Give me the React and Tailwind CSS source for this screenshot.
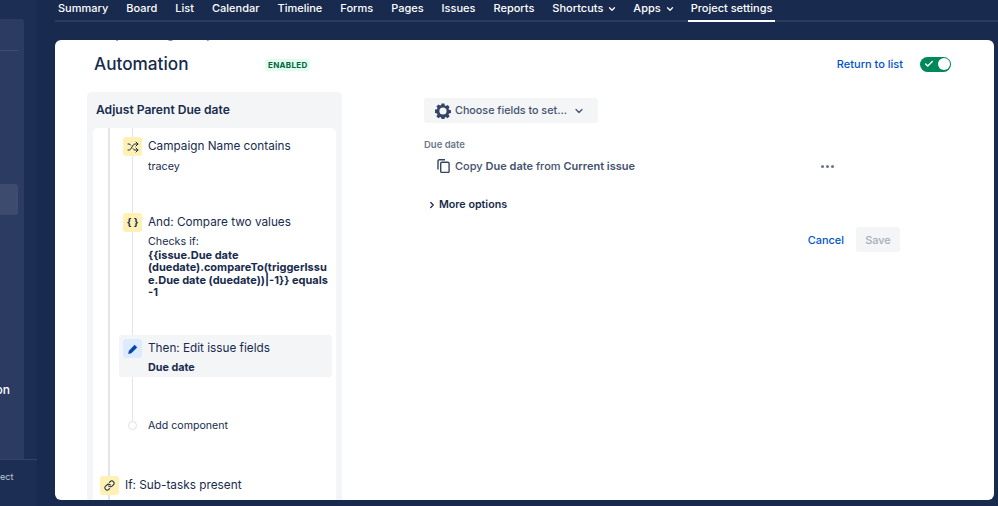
import { Check, ChevronDown, ChevronRight, Link, Shuffle } from "lucide-react";

const navItems = [
  { label: "Summary" },
  { label: "Board" },
  { label: "List" },
  { label: "Calendar" },
  { label: "Timeline" },
  { label: "Forms" },
  { label: "Pages" },
  { label: "Issues" },
  { label: "Reports" },
  { label: "Shortcuts", menu: true },
  { label: "Apps", menu: true },
  { label: "Project settings", active: true },
];

function IconBox({ tone = "bg-[#fff0b3]", className = "", children }) {
  return (
    <div className={`flex h-[19px] w-[19px] shrink-0 items-center justify-center rounded-[3px] ${tone} ${className}`}>
      {children}
    </div>
  );
}

function GearIcon() {
  return (
    <svg width="16" height="16" viewBox="0 0 16 16" fill="#344563">
      <path
        fillRule="evenodd"
        d="M6.6.6h2.8l.4 2 1.1.5 1.7-1.1 2 2-1.1 1.7.5 1.1 2 .4v2.8l-2 .4-.5 1.1 1.1 1.7-2 2-1.7-1.1-1.1.5-.4 2H6.6l-.4-2-1.1-.5-1.7 1.1-2-2 1.1-1.7-.5-1.1-2-.4V6.6l2-.4.5-1.1L1.4 3.4l2-2 1.7 1.1 1.1-.5ZM8 4.4a3.6 3.6 0 1 0 0 7.2 3.6 3.6 0 0 0 0-7.2Z"
      />
    </svg>
  );
}

function CopyIcon() {
  return (
    <svg width="13" height="14" viewBox="0 0 13 14" fill="none" stroke="#344563" strokeWidth="1.4">
      <path d="M1 10.5V2a1.2 1.2 0 0 1 1.2-1.2H8" />
      <rect x="3.7" y="3.2" width="8.4" height="10.2" rx="1.2" />
    </svg>
  );
}

function RuleRow({ icon, title, selected, children, className = "" }) {
  return (
    <div className={`relative ml-[26px] flex w-[213px] gap-[6px] rounded-[3px] pl-1 pr-[2px] pt-1 ${selected ? "bg-[#f4f5f7]" : ""} ${className}`}>
      {icon}
      <div className="min-w-0 flex-1 pt-px">
        <div className="text-[11.75px] leading-[17px]">{title}</div>
        <div className={`break-words text-[10.75px] leading-[12.4px] ${selected ? "mt-[4.5px]" : "mt-[5.5px]"}`}>{children}</div>
      </div>
    </div>
  );
}

function RulePanel() {
  return (
    <div className="flex h-[420px] w-[255px] shrink-0 flex-col rounded-t-[5px] bg-[#f4f5f7] px-[6px]">
      <div className="pl-[3px] pt-[9px] text-[12.1px] font-semibold leading-[17px]">Adjust Parent Due date</div>
      <div className="relative mt-[10px] flex-1 overflow-hidden rounded-t-[5px] bg-white pt-[5px]">
        <div className="absolute bottom-0 left-[15px] top-0 w-[1.5px] bg-[#e4e5ea]" />
        <div className="absolute left-[38.5px] top-0 h-[293px] w-[1.5px] bg-[#e4e5ea]" />
        <RuleRow
          title="Campaign Name contains"
          icon={
            <IconBox className="relative">
              <Shuffle size={12} strokeWidth={2} />
            </IconBox>
          }
        >
          tracey
        </RuleRow>
        <RuleRow
          className="mt-[36px]"
          title="And: Compare two values"
          icon={
            <IconBox className="relative">
              <span className="text-[10px] font-bold leading-none">{"{ }"}</span>
            </IconBox>
          }
        >
          <div>Checks if:</div>
          <div className="text-[11px] font-bold">
            {"{{issue.Due date (duedate).compareTo(triggerIssue.Due date (duedate))|-1}} equals -1"}
          </div>
        </RuleRow>
        <RuleRow
          selected
          className="mt-[37px] h-[42px]"
          title="Then: Edit issue fields"
          icon={
            <IconBox tone="bg-[#deebff]" className="relative">
              <svg width="12" height="12" viewBox="0 0 12 12" fill="#0747a6">
                <path d="M7.6 1.8 10.2 4.4 4.3 10.2 1.2 10.9 1.9 7.7Z" />
              </svg>
            </IconBox>
          }
        >
          <span className="font-bold">Due date</span>
        </RuleRow>
        <div className="relative ml-[35px] mt-[42px] flex h-[12px] items-center gap-[11px] text-[10.6px]">
          <span className="h-[9px] w-[9px] shrink-0 rounded-full border-[1.5px] border-[#dfe1e6] bg-white" />
          <span>Add component</span>
        </div>
        <div className="relative ml-[7px] mt-[45px] flex items-center gap-[6px]">
          <IconBox>
            <Link size={11} strokeWidth={2.2} />
          </IconBox>
          <span className="text-[11.8px] leading-[17px]">If: Sub-tasks present</span>
        </div>
      </div>
    </div>
  );
}

function FieldEditor() {
  return (
    <div className="ml-[82px] w-[476px] pt-[6px]">
      <button className="flex h-[25px] w-[174px] items-center rounded-[3px] bg-[#f4f5f7] pl-[11px] text-[10.75px] font-medium text-[#42526e]">
        <GearIcon />
        <span className="ml-[4px] mt-[2px]">Choose fields to set...</span>
        <ChevronDown size={12} strokeWidth={2.5} className="ml-[6px]" />
      </button>
      <div className="mt-[15px] text-[9.5px] font-semibold leading-[14px] text-[#6b778c]">Due date</div>
      <div className="mt-[6px] flex h-[16px] items-center pl-[13px] text-[11px] font-medium text-[#42526e]">
        <CopyIcon />
        <span className="ml-[5px]">
          Copy <b className="font-semibold">Due date</b> from <b className="font-semibold">Current issue</b>
        </span>
        <div className="ml-auto mr-[66px] flex gap-[2px]">
          <span className="h-[3px] w-[3px] rounded-full bg-[#6b778c]" />
          <span className="h-[3px] w-[3px] rounded-full bg-[#6b778c]" />
          <span className="h-[3px] w-[3px] rounded-full bg-[#6b778c]" />
        </div>
      </div>
      <div className="mt-[23px] flex items-center pl-[3px] text-[10.7px] font-semibold">
        <ChevronRight size={10} strokeWidth={3} />
        <span className="ml-[2px]">More options</span>
      </div>
      <div className="mt-[14px] flex items-center justify-end gap-[12px] text-[10.9px] font-medium">
        <span className="pt-[2px] text-[#0052cc]">Cancel</span>
        <span className="flex h-[25px] w-[44px] items-center justify-center rounded-[3px] bg-[#f4f5f7] pt-[2px] text-[#a5adba]">Save</span>
      </div>
    </div>
  );
}

export default function App() {
  return (
    <div className="flex h-[506px] w-[998px] overflow-hidden bg-[#182a4e] font-['Inter',sans-serif] text-[#172b4d]">
      <aside className="relative h-full w-[55px] shrink-0 text-white">
        <div className="h-full w-[37px] bg-[#1c2e54]">
          <div className="relative h-[440px] w-6 translate-y-[19px] rounded-tr-[3px] bg-[#2b3b62]">
            <div className="absolute left-0 top-[31px] h-px w-[18px] bg-[#3e4d72]" />
            <div className="absolute left-0 top-[165px] h-[31px] w-[18px] rounded-r-[3px] bg-[#3d4b6e]" />
            <div className="absolute right-[14px] top-[363px] text-[12px] font-medium leading-[15px]">on</div>
          </div>
          <div className="h-px w-[37px] translate-y-[19px] bg-[#33436a]" />
          <div className="w-[13px] translate-y-[30px] text-right text-[9px] leading-[12px] text-[#c1c7d6]">ect</div>
        </div>
      </aside>
      <div className="flex min-w-0 flex-1 flex-col">
        <nav className="flex h-[22px] shrink-0 gap-[12px] border-b-2 border-[#2b3c60] text-[11px] font-medium text-white">
          {navItems.map((item) => (
            <div
              key={item.label}
              className={`-mb-[2px] flex h-[22px] items-start px-[3px] pt-px leading-[15px] ${item.active ? "border-b-2 border-white" : ""}`}
            >
              {item.label}
              {item.menu ? <ChevronDown size={10} strokeWidth={3} className="-mr-[2px] ml-[4px] mt-[3px]" /> : null}
            </div>
          ))}
        </nav>
        <main className="ml-0 mr-[4px] mt-[18px] h-[460px] overflow-hidden rounded-[6px] bg-white pl-[32px]">
          <div className="-mt-[12px] h-[12px] whitespace-nowrap pl-[12px] text-[11px] leading-[14px] text-[#6b778c]">
            Project settings / Project automation / Rule details
          </div>
          <header className="flex h-[42px] items-center pl-[7px] pr-[43px] pt-[6px]">
            <h1 className="w-[171px] text-[17.2px] font-medium leading-[24px]">Automation</h1>
            <span className="mt-px rounded-[3px] bg-[#e3fcef] px-[3px] text-[8px] font-bold leading-[12px] tracking-[0.3px] text-[#006644]">
              ENABLED
            </span>
            <span className="ml-auto text-[11px] font-medium text-[#0052cc]">Return to list</span>
            <div className="ml-[17px] flex h-[15px] w-[31px] items-center justify-between rounded-full bg-[#00875a] pl-1 pr-[1.5px] text-white">
              <Check size={10} strokeWidth={3.5} />
              <span className="h-[12px] w-[12px] rounded-full bg-white" />
            </div>
          </header>
          <div className="mt-[10px] flex">
            <RulePanel />
            <FieldEditor />
          </div>
        </main>
      </div>
    </div>
  );
}
